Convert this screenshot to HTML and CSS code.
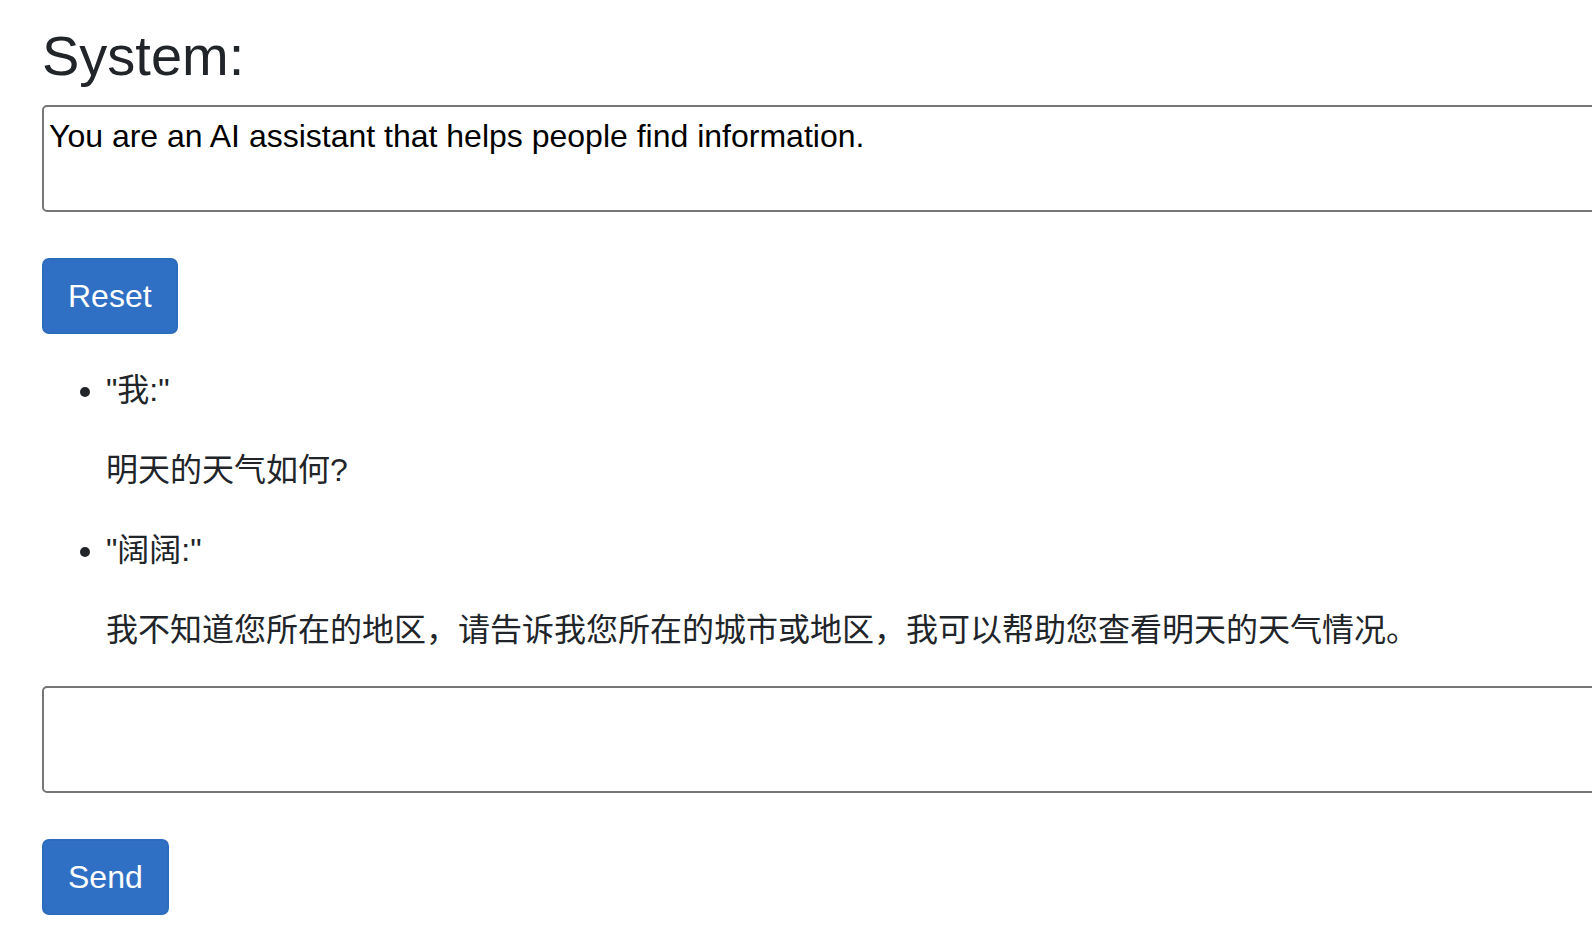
FILE: index.html
```html
<!DOCTYPE html>
<html>
<head>
	<meta charset="UTF-8">

	<title>Chat</title>

	<link rel="stylesheet" href="styles.css">
</head>

<body>
	<div id="app">
		<h3 class="title">System:</h3>
		<textarea class="prompt" id="system_prompt">You are an AI assistant that helps people find information.</textarea>

		<button class="btn" id="reset">Reset</button>

		<ul class="messages">
			<li>
				"我:"
				<p>明天的天气如何?</p>
			</li>
			<li>
				"阔阔:"
				<p>我不知道您所在的地区，请告诉我您所在的城市或地区，我可以帮助您查看明天的天气情况。</p>
			</li>
		</ul>

		<textarea class="prompt" id="user_input"></textarea>

		<button class="btn" id="send">Send</button>
	</div>
</body>

</html>
```

FILE: styles.css
```css
		html {
			overflow: hidden;
		}

		body {
			margin: 0;
			padding: 0;
			font-family: "Liberation Sans", Arial, "Noto Sans CJK SC", sans-serif;
			font-size: 32px;
			line-height: 1.5;
			color: #212529;
			background: #fff;
		}

		#app {
			padding: 22px 0 0 42px;
		}

		.title {
			margin: 0 0 16px 0;
			font-size: 56px;
			font-weight: 400;
			line-height: 1.2;
		}

		.prompt {
			display: block;
			box-sizing: border-box;
			width: 1600px;
			height: 107px;
			margin: 0 0 46px 0;
			padding: 11px 5px 4px 5px;
			border: 2px solid #767676;
			border-radius: 5px;
			font-family: "Liberation Sans", Arial, sans-serif;
			font-size: 32px;
			line-height: normal;
			color: #000;
			resize: none;
		}

		.btn {
			display: block;
			padding: 12px 24px;
			border: 2px solid #2d6bbd;
			border-radius: 7px;
			background: #3070c4;
			color: #fff;
			font-family: "Liberation Sans", Arial, sans-serif;
			font-size: 32px;
			line-height: 1.5;
			cursor: pointer;
		}

		.messages {
			margin: 32px 0 32px 0;
			padding-left: 64px;
		}

		.messages p {
			margin: 32px 0 32px 0;
		}

		.messages li:last-child p {
			margin-bottom: 0;
		}
```
